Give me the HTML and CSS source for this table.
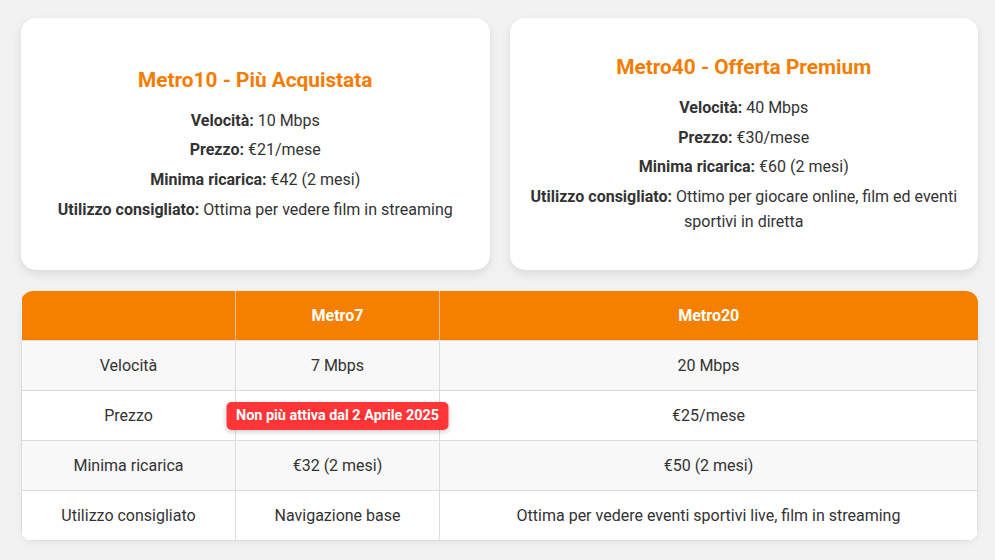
FILE: index.html
```html
<!DOCTYPE html>
<html lang="it">
<head>
<meta charset="utf-8">
<title>Offerte Metro</title>
<link rel="stylesheet" href="styles.css">
</head>
<body>
<main class="page">
  <section class="cards">
    <article class="card">
      <h3 class="card-title">Metro10 - Più Acquistata</h3>
      <p><strong>Velocità:</strong> 10 Mbps</p>
      <p><strong>Prezzo:</strong> €21/mese</p>
      <p><strong>Minima ricarica:</strong> €42 (2 mesi)</p>
      <p><strong>Utilizzo consigliato:</strong> Ottima per vedere film in streaming</p>
    </article>
    <article class="card">
      <h3 class="card-title">Metro40 - Offerta Premium</h3>
      <p><strong>Velocità:</strong> 40 Mbps</p>
      <p><strong>Prezzo:</strong> €30/mese</p>
      <p><strong>Minima ricarica:</strong> €60 (2 mesi)</p>
      <p><strong>Utilizzo consigliato:</strong> Ottimo per giocare online, film ed eventi sportivi in diretta</p>
    </article>
  </section>

  <div class="table-wrap">
    <table class="compare">
      <colgroup>
        <col class="col-label">
        <col class="col-m7">
        <col>
      </colgroup>
      <thead>
        <tr><th></th><th>Metro7</th><th>Metro20</th></tr>
      </thead>
      <tbody>
        <tr><td>Velocità</td><td>7 Mbps</td><td>20 Mbps</td></tr>
        <tr><td>Prezzo</td><td class="expired"><span class="old-price">€16/mese</span><span class="badge">Non più attiva dal 2 Aprile 2025</span></td><td>€25/mese</td></tr>
        <tr><td>Minima ricarica</td><td>€32 (2 mesi)</td><td>€50 (2 mesi)</td></tr>
        <tr><td>Utilizzo consigliato</td><td>Navigazione base</td><td>Ottima per vedere eventi sportivi live, film in streaming</td></tr>
      </tbody>
    </table>
  </div>
</main>
</body>
</html>
```

FILE: styles.css
```css
* { box-sizing: border-box; }

html, body {
  margin: 0;
  background: #f2f2f2;
}

body {
  font-family: Roboto, "Liberation Sans", Arial, sans-serif;
  color: #333;
  font-size: 16px;
}

.page {
  padding: 18px 17px 19px 21px;
  display: flex;
  flex-direction: column;
  gap: 21px;
}

.cards {
  display: grid;
  grid-template-columns: 1fr 1fr;
  gap: 20px;
}

.card {
  background: #fff;
  border-radius: 15px;
  box-shadow: 0 4px 10px rgba(0, 0, 0, 0.1);
  padding: 31px 20px 33px;
  text-align: center;
  display: flex;
  flex-direction: column;
  justify-content: center;
}

.card-title {
  margin: 6px 0 14px;
  font-size: 20.8px;
  line-height: 24px;
  font-weight: 700;
  color: #f57c00;
}

.card p {
  margin: 2px 0;
  line-height: 1.6;
}

.card strong {
  font-weight: 700;
}

.table-wrap {
  border-radius: 12px;
  overflow: hidden;
  box-shadow: 0 2px 6px rgba(0, 0, 0, 0.06);
  background: #fff;
}

.compare {
  width: 100%;
  border-collapse: collapse;
  table-layout: fixed;
}

.col-label { width: 214px; }
.col-m7 { width: 204px; }

.compare th,
.compare td {
  height: 50px;
  padding: 0 10px;
  text-align: center;
  border: 1px solid #ddd;
  font-size: 16px;
}

.compare thead th { border-top: none; }
.compare thead th:first-child { border-left: none; }
.compare thead th:last-child { border-right: none; }

.compare th {
  background: #f58000;
  color: #fff;
  font-weight: 700;
  border-color: #f7c596;
  border-bottom-color: #ddd;
}

.compare tbody tr:nth-child(odd) td { background: #f8f8f8; }
.compare tbody tr:nth-child(even) td { background: #fff; }

.expired {
  position: relative;
}

.old-price {
  color: #b3261e;
}

.badge {
  position: absolute;
  left: 50%;
  top: 50%;
  transform: translate(-50%, -50%);
  white-space: nowrap;
  background: rgba(255, 40, 44, 0.94);
  color: #fff;
  font-weight: 700;
  font-size: 14.4px;
  line-height: 28px;
  padding: 0 10px;
  border-radius: 5px;
  box-shadow: 0 2px 5px rgba(0, 0, 0, 0.2);
}
```
